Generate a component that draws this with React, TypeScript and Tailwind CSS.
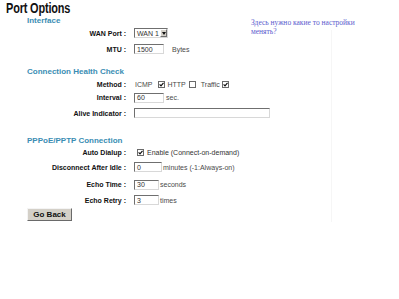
import React from 'react';

const label = "text-right text-[7px] font-bold text-[#111] leading-none pr-[1px]";
const plain = "text-[7px] text-[#4a4a4a] leading-none";

function Box({ w, value }: { w: string; value?: string }) {
  return (
    <div
      className={`${w} h-[10px] bg-white border border-t-[#6f6f6f] border-l-[#6f6f6f] border-b-[#d8d8d8] border-r-[#d8d8d8] flex items-center pl-[2px] text-[7px] text-[#333] leading-none`}
    >
      {value}
    </div>
  );
}

function Check() {
  return (
    <svg width="7" height="7" viewBox="0 0 7 7" className="shrink-0">
      <rect x="0.5" y="0.5" width="6" height="6" fill="#fff" stroke="#6a6a6a" />
      <path d="M1.6 3.4 L3 4.8 L5.5 1.9" fill="none" stroke="#111" strokeWidth="1.2" />
    </svg>
  );
}

function Empty() {
  return (
    <svg width="7" height="7" viewBox="0 0 7 7" className="shrink-0">
      <rect x="0.5" y="0.5" width="6" height="6" fill="#fff" stroke="#6a6a6a" />
    </svg>
  );
}

function Row({ h, name, children }: { h: string; name: string; children: React.ReactNode }) {
  return (
    <div className={`${h} grid grid-cols-[127px_1fr] gap-x-[7px] items-center`}>
      <div className={label}>{name}</div>
      <div className="flex items-center">{children}</div>
    </div>
  );
}

function Head({ h, text }: { h: string; text: string }) {
  return (
    <div className={`${h} flex items-center pl-[27px] text-[8px] font-bold text-[#3a8db3] leading-none`}>
      {text}
    </div>
  );
}

export default function App() {
  return (
    <div className="w-[399px] h-[299px] bg-white font-['Liberation_Sans',Arial,sans-serif] overflow-hidden">
      <div className="h-[16px] pl-[6px] flex items-center">
        <span className="inline-block origin-left scale-x-[0.78] text-[14px] font-bold tracking-[-0.2px] text-[#111] leading-none whitespace-nowrap">
          Port Options
        </span>
      </div>

      <div className="flex">
        <div className="w-[251px] shrink-0">
          <Head h="h-[10px]" text="Interface" />
          <Row h="h-[14px]" name="WAN Port :">
            <div className="w-[34px] h-[10px] bg-white border border-t-[#6f6f6f] border-l-[#6f6f6f] border-b-[#d8d8d8] border-r-[#d8d8d8] flex items-center">
              <span className="flex-1 pl-[2px] text-[7px] text-[#333] leading-none">WAN 1</span>
              <span className="w-[7px] h-[8px] bg-[#d4d0c8] border border-t-white border-l-white border-b-[#6f6f6f] border-r-[#6f6f6f] flex items-center justify-center">
                <svg width="4" height="3" viewBox="0 0 4 3">
                  <path d="M0 0 H4 L2 3 Z" fill="#111" />
                </svg>
              </span>
            </div>
          </Row>
          <Row h="h-[18px]" name="MTU :">
            <Box w="w-[30px]" value="1500" />
            <span className={`${plain} ml-[8px]`}>Bytes</span>
          </Row>

          <div className="h-[8px]" />
          <Head h="h-[12px]" text="Connection Health Check" />
          <Row h="h-[12px]" name="Method :">
            <span className={`${plain} ml-[1px]`}>ICMP</span>
            <span className="ml-[5px]"><Check /></span>
            <span className={`${plain} ml-[3px]`}>HTTP</span>
            <span className="ml-[3px]"><Empty /></span>
            <span className={`${plain} ml-[5px]`}>Traffic</span>
            <span className="ml-[2px]"><Check /></span>
          </Row>
          <Row h="h-[15px]" name="Interval :">
            <Box w="w-[30px]" value="60" />
            <span className={`${plain} ml-[2px]`}>sec.</span>
          </Row>
          <Row h="h-[16px]" name="Alive Indicator :">
            <Box w="w-[136px]" />
          </Row>

          <div className="h-[14px]" />
          <Head h="h-[12px]" text="PPPoE/PPTP Connection" />
          <Row h="h-[11px]" name="Auto Dialup :">
            <span className="ml-[3px]"><Check /></span>
            <span className={`${plain} ml-[3px] text-[#333]`}>Enable (Connect-on-demand)</span>
          </Row>
          <Row h="h-[18px]" name="Disconnect After Idle :">
            <Box w="w-[28px]" value="0" />
            <span className={`${plain} ml-[1px]`}>minutes (-1:Always-on)</span>
          </Row>
          <Row h="h-[17px]" name="Echo Time :">
            <Box w="w-[25px]" value="30" />
            <span className={`${plain} ml-[1px]`}>seconds</span>
          </Row>
          <Row h="h-[14px]" name="Echo Retry :">
            <Box w="w-[25px]" value="3" />
            <span className={`${plain} ml-[1px]`}>times</span>
          </Row>

          <div className="pl-[27px] mt-[1px]">
            <button className="w-[45px] h-[13px] bg-[#d4d0c8] border border-t-[#f4f4f4] border-l-[#f4f4f4] border-b-[#6a6a6a] border-r-[#6a6a6a] text-[8px] font-bold text-[#111] leading-none flex items-center justify-center">
              Go Back
            </button>
          </div>
        </div>

        <div className="w-[81px] shrink-0 flex flex-col">
          <div className="h-[14px] pt-[2px] whitespace-nowrap text-[7.5px] leading-[9px] text-[#5c5cce] font-['Liberation_Serif','Times_New_Roman',serif]">
            Здесь нужно какие то настройки
            <br />
            менять?
          </div>
          <div className="h-[192px] border-r border-[#f6f6f6]" />
        </div>
      </div>
    </div>
  );
}
